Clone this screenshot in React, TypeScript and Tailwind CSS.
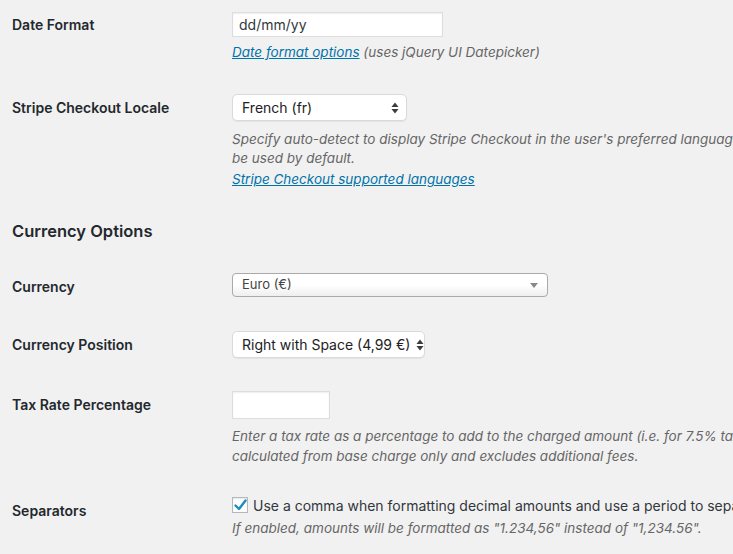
import React from 'react';

const font = "font-['Inter','Liberation_Sans',sans-serif]";

function Arrows() {
  return (
    <svg width="8" height="12" viewBox="0 0 8 12" className="shrink-0">
      <path d="M4 0.5 L7.5 5 H0.5 Z" fill="#3c3c3c" />
      <path d="M4 11.5 L7.5 7 H0.5 Z" fill="#3c3c3c" />
    </svg>
  );
}

function NativeSelect({ value, width }: { value: string; width: string }) {
  return (
    <div className={`${width} h-[27px] bg-white border border-[#dadada] rounded-[5px] shadow-[0_1px_1px_rgba(0,0,0,0.06)] flex items-center justify-between gap-[6px] pl-[9px] pr-[7px] text-[14px] text-[#222]`}>
      <span className="whitespace-nowrap">{value}</span>
      <Arrows />
    </div>
  );
}

function Label({ children, pt = 'pt-[17px]' }: { children: React.ReactNode; pt?: string }) {
  return (
    <div className={`w-[232px] shrink-0 pl-[12px] ${pt} text-[14px] leading-[18px] font-semibold text-[#23282d]`}>
      {children}
    </div>
  );
}

function Desc({ children, leading = 'leading-[19px]' }: { children: React.ReactNode; leading?: string }) {
  return <div className={`text-[13.5px] ${leading} italic text-[#666] whitespace-nowrap`}>{children}</div>;
}

export default function App() {
  return (
    <div className={`w-[733px] h-[554px] overflow-hidden bg-[#f1f1f1] ${font}`}>
      {/* Date Format */}
      <div className="flex h-[82px]">
        <Label pt="pt-[16px]">Date Format</Label>
        <div className="pt-[12px] min-w-0">
          <div className="w-[211px] h-[25px] bg-white border border-[#ddd] shadow-[inset_0_1px_2px_rgba(0,0,0,0.07)] flex items-center px-[6px] text-[14px] text-[#32373c]">
            dd/mm/yy
          </div>
          <div className="mt-[6px]">
            <Desc leading="leading-[18px]">
              <a href="#" className="text-[#0073aa] underline">Date format options</a> (uses jQuery UI Datepicker)
            </Desc>
          </div>
        </div>
      </div>

      {/* Stripe Checkout Locale */}
      <div className="flex h-[118px]">
        <Label>Stripe Checkout Locale</Label>
        <div className="pt-[12px] min-w-0">
          <NativeSelect value="French (fr)" width="w-[175px]" />
          <div className="mt-[9px]">
            <Desc>Specify auto-detect to display Stripe Checkout in the user's preferred language. English will</Desc>
            <Desc>be used by default.</Desc>
            <div className="mt-[2px]">
              <Desc>
                <a href="#" className="text-[#0073aa] underline">Stripe Checkout supported languages</a>
              </Desc>
            </div>
          </div>
        </div>
      </div>

      {/* Heading */}
      <div className="h-[61px] pl-[12px] pt-[20px]">
        <h2 className="text-[16.5px] leading-[22px] font-semibold text-[#23282d]">Currency Options</h2>
      </div>

      {/* Currency */}
      <div className="flex h-[58px]">
        <Label>Currency</Label>
        <div className="pt-[12px] min-w-0">
          <div className="w-[316px] h-[24px] rounded-[4px] border border-[#aaa] bg-gradient-to-b from-white from-50% to-[#eee] flex items-center justify-between pl-[9px] pr-[9px] text-[13px] text-[#444]">
            <span>Euro (€)</span>
            <svg width="8" height="5" viewBox="0 0 8 5">
              <path d="M0 0 H8 L4 5 Z" fill="#888" />
            </svg>
          </div>
        </div>
      </div>

      {/* Currency Position */}
      <div className="flex h-[60px]">
        <Label>Currency Position</Label>
        <div className="pt-[12px] min-w-0">
          <NativeSelect value="Right with Space (4,99 €)" width="w-[193px]" />
        </div>
      </div>

      {/* Tax Rate */}
      <div className="flex h-[106px]">
        <Label>Tax Rate Percentage</Label>
        <div className="pt-[12px] min-w-0">
          <div className="w-[98px] h-[28px] bg-white border border-[#ddd] shadow-[inset_0_1px_2px_rgba(0,0,0,0.07)]" />
          <div className="mt-[7px]">
            <Desc leading="leading-[20px]">Enter a tax rate as a percentage to add to the charged amount (i.e. for 7.5% tax, enter 7.5). Tax is</Desc>
            <Desc leading="leading-[20px]">calculated from base charge only and excludes additional fees.</Desc>
          </div>
        </div>
      </div>

      {/* Separators */}
      <div className="flex">
        <Label>Separators</Label>
        <div className="pt-[12px] min-w-0">
          <div className="flex items-center gap-[5px] h-[16px]">
            <div className="w-[16px] h-[16px] shrink-0 bg-white border border-[#b4b9be] shadow-[inset_0_1px_2px_rgba(0,0,0,0.1)] flex items-center justify-center">
              <svg width="13" height="12" viewBox="0 0 13 12">
                <path d="M1.5 6.5 L5 10 L11.5 1.5" fill="none" stroke="#1e8cbe" strokeWidth="2.4" strokeLinecap="round" strokeLinejoin="round" />
              </svg>
            </div>
            <span className="text-[14px] text-[#32373c] whitespace-nowrap">
              Use a comma when formatting decimal amounts and use a period to separate thousands.
            </span>
          </div>
          <div className="mt-[6px]">
            <Desc>If enabled, amounts will be formatted as "1.234,56" instead of "1,234.56".</Desc>
          </div>
        </div>
      </div>
    </div>
  );
}
